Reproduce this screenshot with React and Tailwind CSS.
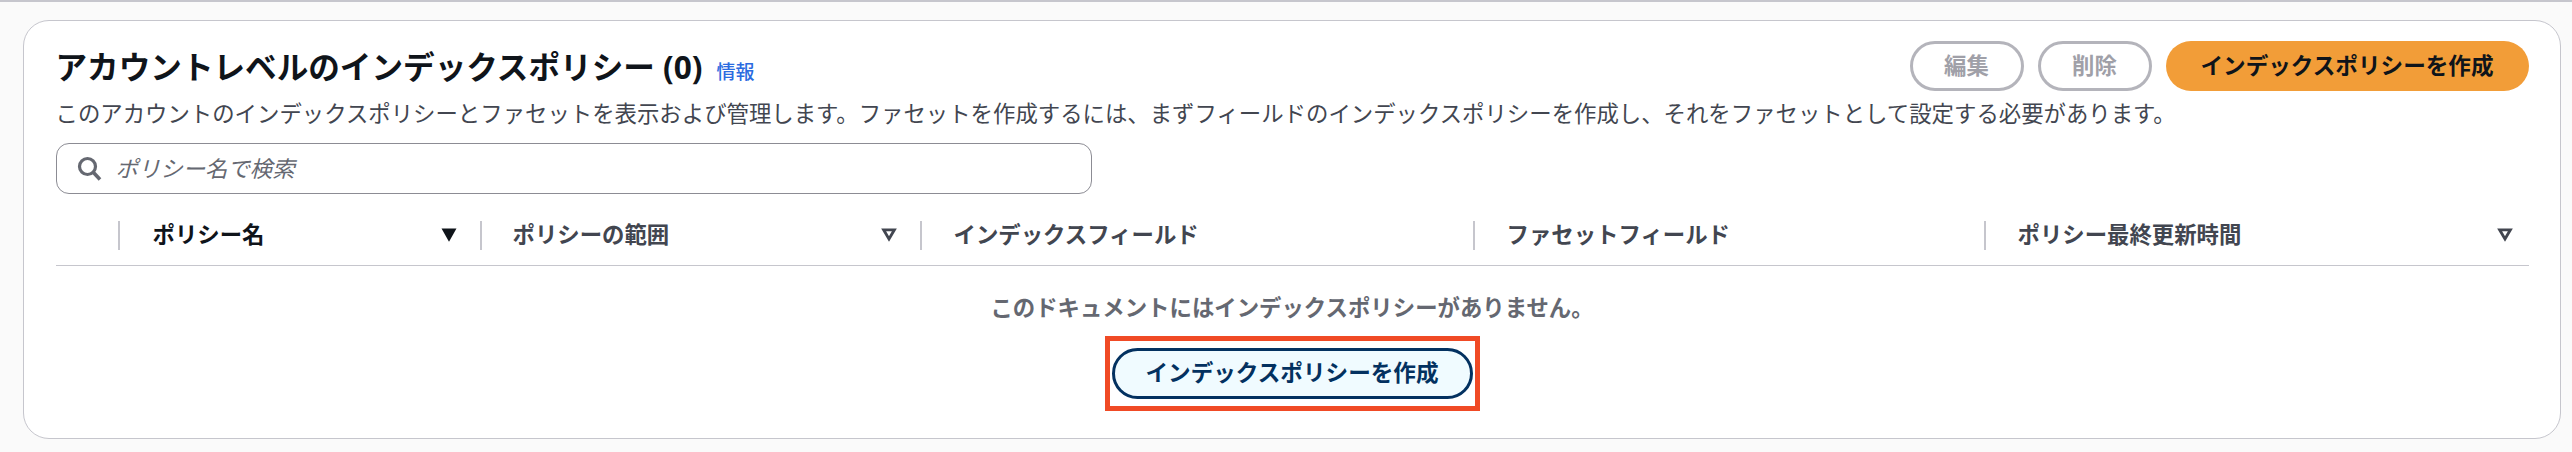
import React from 'react';

const SortDown = ({ filled }) => (
    <svg width="16" height="14" viewBox="0 0 16 14" className="shrink-0">
        {filled ? (
            <path d="M.5.5h15L8 13.8z" fill="currentColor" />
        ) : (
            <path d="M2.6 1.8h10.8L8 11z" fill="none" stroke="currentColor" strokeWidth="2.8" />
        )}
    </svg>
);

const columns = [
    { label: 'ポリシー名', sort: 'active', active: true, padding: 'pl-[33px] pr-[23px]' },
    { label: 'ポリシーの範囲', sort: 'idle', padding: 'pl-[31px] pr-[23px]' },
    { label: 'インデックスフィールド', padding: 'pl-[32px] pr-[23px]' },
    { label: 'ファセットフィールド', padding: 'pl-[32px] pr-[23px]' },
    { label: 'ポリシー最終更新時間', sort: 'idle', padding: 'pl-[32px] pr-[16px]' },
];

const App = () => {
    return (
        <div className="h-[452px] w-[2572px] overflow-hidden bg-[#fafafa] border-t-2 border-[#c6c6cd] pt-[18px] pl-[23px] pr-[11px] font-['Noto_Sans','Noto_Sans_CJK_JP',sans-serif] text-[22.4px] leading-[30px] text-[#0f141a]">
            <div className="h-[419px] rounded-[26px] border-[1.5px] border-[#c6c6cd] bg-white px-[31.5px] pt-[19.5px]">
                <div className="flex justify-between items-start h-[50px]">
                    <div className="flex items-baseline mt-[6px]">
                        <h1 className="text-[31.6px] leading-[40px] font-bold">
                            アカウントレベルのインデックスポリシー (0)
                        </h1>
                        <a className="ml-[14px] text-[19px] leading-[26px] font-medium text-[#2a6be0]">情報</a>
                    </div>
                    <div className="flex gap-[14px]">
                        <button className="h-[50px] w-[114px] rounded-[25px] border-[3px] border-[#b4b4bb] font-bold text-[#a0a0a8]">編集</button>
                        <button className="h-[50px] w-[114px] rounded-[25px] border-[3px] border-[#b4b4bb] font-bold text-[#a0a0a8]">削除</button>
                        <button className="h-[50px] w-[363px] rounded-[25px] bg-[#f29d38] text-[22.6px] font-bold">インデックスポリシーを作成</button>
                    </div>
                </div>
                <p className="mt-[8px] text-[#424650]">
                    このアカウントのインデックスポリシーとファセットを表示および管理します。ファセットを作成するには、まずフィールドのインデックスポリシーを作成し、それをファセットとして設定する必要があります。
                </p>
                <div className="mt-[14px] flex items-center h-[51px] w-[1036px] rounded-[13px] border-[1.5px] border-[#8c8c94] pl-[20px]">
                    <svg width="25" height="25" viewBox="0 0 25 25" fill="none" stroke="#656871" className="shrink-0">
                        <circle cx="10.5" cy="10.5" r="8" strokeWidth="3.2" />
                        <path d="M16.5 16.5 23 23.5" strokeWidth="3.6" />
                    </svg>
                    <span className="ml-[14px] mt-[2px] italic text-[#656871]">ポリシー名で検索</span>
                </div>
                <div className="mt-[12px] flex items-center h-[60px] border-b-[1.5px] border-[#c6c6cd]">
                    <div className="w-[62px] shrink-0" />
                    <div className="flex-1 grid grid-cols-[362px_440px_553px_511px_1fr]">
                        {columns.map((col) => (
                            <div
                                key={col.label}
                                className={`flex items-center justify-between h-[29px] border-l-2 border-[#c6c6cd] ${col.padding} font-bold ${col.active ? 'text-[#0f141a]' : 'text-[#424650]'}`}
                            >
                                <span>{col.label}</span>
                                {col.sort && <SortDown filled={col.sort === 'active'} />}
                            </div>
                        ))}
                    </div>
                </div>
                <div className="flex flex-col items-center pt-[27px]">
                    <p className="font-bold text-[#656871]">このドキュメントにはインデックスポリシーがありません。</p>
                    <div className="mt-[13px] border-[5px] border-[#f04a25] px-[2px] py-[7px]">
                        <button className="block h-[51px] w-[361px] rounded-[26px] border-[3px] border-[#033160] bg-[#f0fbff] text-[22.6px] font-bold text-[#033160]">
                            インデックスポリシーを作成
                        </button>
                    </div>
                </div>
            </div>
        </div>
    );
};

export default App;
